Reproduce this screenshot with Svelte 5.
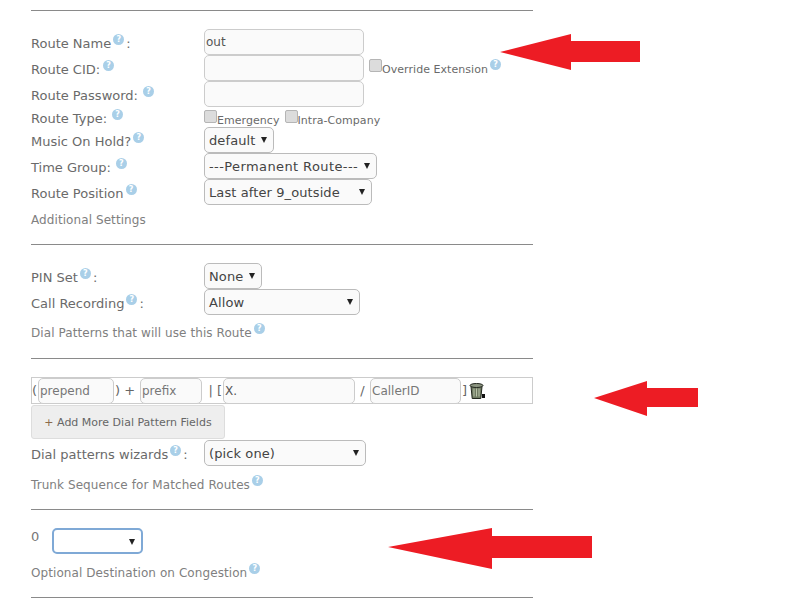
<script>
  const mainRows = [
    { label: 'Route Name', colon: true, value: 'out' },
    { label: 'Route CID:', value: '', override: true, helpCls: 'wide' },
    { label: 'Route Password:', value: '', helpCls: 'wider' }
  ];
  const selectRows = [
    { label: 'Music On Hold?', value: 'default', cls: 'w-moh' },
    { label: 'Time Group:', value: '---Permanent Route---', cls: 'w-time', helpCls: 'wider' },
    { label: 'Route Position', value: 'Last after 9_outside', cls: 'w-pos' }
  ];
</script>

{#snippet help(cls = '')}
  <span class="help {cls}">?</span>
{/snippet}

{#snippet dropdown(value, cls)}
  <div class="sel {cls}"><span>{value}</span><i class="caret"></i></div>
{/snippet}

<div class="page">
  <hr class="first" />

  <section class="rows">
    {#each mainRows as row}
      <div class="row">
        <div class="label">{row.label}{@render help(row.helpCls)}{#if row.colon}<span class="colon">:</span>{/if}</div>
        <div class="field">
          <input class="text w-main" value={row.value} />
          {#if row.override}
            <span class="check over"><i class="box"></i><small>Override Extension</small>{@render help()}</span>
          {/if}
        </div>
      </div>
    {/each}
    <div class="row short">
      <div class="label">Route Type:{@render help('wider')}</div>
      <div class="field checks">
        <span class="check"><i class="box"></i><small>Emergency</small></span>
        <span class="check"><i class="box"></i><small>Intra-Company</small></span>
      </div>
    </div>
    {#each selectRows as row}
      <div class="row">
        <div class="label">{row.label}{@render help(row.helpCls)}</div>
        <div class="field">{@render dropdown(row.value, row.cls)}</div>
      </div>
    {/each}
  </section>

  <h5 class="title t-additional">Additional Settings</h5>
  <hr />

  <section class="rows">
    <div class="row">
      <div class="label">PIN Set{@render help()}<span class="colon">:</span></div>
      <div class="field">{@render dropdown('None', 'w-pin')}</div>
    </div>
    <div class="row">
      <div class="label">Call Recording{@render help()}<span class="colon">:</span></div>
      <div class="field">{@render dropdown('Allow', 'w-rec')}</div>
    </div>
  </section>

  <h5 class="title t-dial">Dial Patterns that will use this Route{@render help()}</h5>
  <hr />

  <div class="pattern">
    <span class="p-open">(</span>
    <input class="text w-prepend" placeholder="prepend" />
    <span class="p-plus">) +</span>
    <input class="text w-prefix" placeholder="prefix" />
    <span class="p-bar">| [</span>
    <input class="text w-x" value="X." />
    <span class="p-slash">/</span>
    <input class="text w-caller" placeholder="CallerID" />
    <span class="p-close">]</span>
    <svg class="trash" width="18" height="18" viewBox="0 0 18 18">
      <path d="M3 4.500h11l-1.200 12H4.200z" fill="#6f7a62" stroke="#23281f" />
      <path d="M6 6.500v8M8.500 6.500v8M11 6.500v8" stroke="#b9c2a9" stroke-width="1" />
      <ellipse cx="8.500" cy="3.500" rx="6.500" ry="2" fill="#8b9480" stroke="#23281f" />
      <path d="M14 12h3v4h-3z" fill="#111" />
    </svg>
  </div>

  <button class="add"><span class="plus">+</span> Add More Dial Pattern Fields</button>

  <div class="row wizard">
    <div class="label">Dial patterns wizards{@render help()}<span class="colon">:</span></div>
    <div class="field">{@render dropdown('(pick one)', 'w-wiz')}</div>
  </div>

  <h5 class="title t-trunk">Trunk Sequence for Matched Routes{@render help()}</h5>
  <hr />

  <div class="seq">
    <span class="num">0</span>
    {@render dropdown('', 'w-seq focus')}
  </div>

  <h5 class="title t-cong">Optional Destination on Congestion{@render help()}</h5>
  <hr />
</div>

<svg class="arrow a1" width="142" height="38" viewBox="0 0 142 38">
  <path d="M1 19 72 1V8H141V29H72V37Z" />
</svg>
<svg class="arrow a2" width="106" height="37" viewBox="0 0 106 37">
  <path d="M1 18 54 1V8H105V27H54V36Z" />
</svg>
<svg class="arrow a3" width="206" height="43" viewBox="0 0 206 43">
  <path d="M1 20 105 1V9H205V31H105V42Z" />
</svg>

<style>
  :global(body) {
    background: #fff;
    font-family: "DejaVu Sans", Verdana, sans-serif;
    font-size: 13px;
    color: #666;
  }
  .page {
    width: 533px;
    height: 599px;
    padding: 10px 0 0 31px;
    box-sizing: border-box;
  }
  hr {
    margin: 0;
    border: 0;
    border-top: 1px solid #8a8a8a;
  }
  hr.first {
    margin-bottom: 18px;
  }
  .rows {
    margin-top: 18px;
  }
  .row {
    display: flex;
    align-items: center;
    height: 26px;
  }
  .row.short {
    height: 20px;
  }
  .label {
    width: 173px;
    flex: none;
    padding-top: 2px;
    white-space: nowrap;
    color: #6a6a6a;
  }
  .colon {
    margin-left: 2px;
  }
  .field {
    display: flex;
    align-items: center;
    flex: 1;
  }
  .help {
    display: inline-block;
    width: 11px;
    height: 11px;
    margin: -8px 0 -8px 2px;
    border-radius: 50%;
    background: #a9cfe8;
    color: #fff;
    font-size: 8px;
    font-weight: bold;
    line-height: 11px;
    text-align: center;
    vertical-align: 6px;
  }
  .help.wide { margin-left: 3px; }
  .help.wider { margin-left: 5px; }
  .text {
    box-sizing: border-box;
    height: 26px;
    margin: 0;
    padding: 0 1px;
    border: 1px solid #ccc;
    border-radius: 5px;
    background: #fafafa;
    font: inherit;
    font-size: 12px;
    color: #555;
  }
  .text::placeholder {
    color: #777;
    opacity: 1;
  }
  .w-main { width: 160px; }
  .check {
    display: inline-flex;
    align-items: flex-start;
    white-space: nowrap;
  }
  .check small {
    margin-top: 4px;
    font-size: 11px;
    letter-spacing: 0.05px;
    color: #6a6a6a;
  }
  .check .help { margin-top: 0; margin-bottom: 0; }
  .box {
    display: block;
    width: 11px;
    height: 11px;
    border: 1px solid #b5b5b5;
    border-radius: 2px;
    background: #dcdcdc;
  }
  .over { margin: -2px 0 0 5px; }
  .checks {
    gap: 5px;
    padding-top: 2px;
  }
  .sel {
    position: relative;
    box-sizing: border-box;
    height: 26px;
    padding-left: 4px;
    border: 1px solid #bbb;
    border-radius: 5px;
    background: #fafafa;
    color: #444;
    letter-spacing: 0.1px;
    line-height: 26px;
    white-space: nowrap;
  }
  .caret {
    position: absolute;
    top: 9px;
    right: 6px;
    border-top: 6px solid #222;
    border-left: 3px solid transparent;
    border-right: 3px solid transparent;
  }
  .sel.focus {
    border: 2px solid #7fa9d6;
    background: #fff;
  }
  .w-moh { width: 70px; }
  .w-time { width: 173px; letter-spacing: 0.4px; }
  .w-pos { width: 168px; }
  .w-pin { width: 58px; }
  .w-rec { width: 156px; }
  .w-wiz { width: 162px; }
  .w-seq { width: 91px; }
  .title {
    margin: 0;
    font-size: 12px;
    font-weight: normal;
    letter-spacing: 0.08px;
    color: #808080;
    line-height: 16px;
  }
  .t-additional { margin: 7px 0 16px; }
  .t-dial { margin: 10px 0 17px; }
  .t-trunk { margin: 11px 0 16px; }
  .t-cong { margin: 11px 0 16px; }
  .pattern {
    box-sizing: border-box;
    display: flex;
    align-items: center;
    width: 502px;
    height: 27px;
    margin-top: 18px;
    border: 1px solid #ccc;
    white-space: nowrap;
  }
  .p-open { width: 6px; }
  .p-plus { width: 26px; padding-left: 1px; box-sizing: border-box; }
  .p-bar { width: 21px; text-align: right; padding-right: 1px; box-sizing: border-box; }
  .p-slash { width: 15px; text-align: center; }
  .p-close { width: 6px; text-align: right; }
  .w-prepend { width: 76px; }
  .w-prefix { width: 62px; }
  .w-x { width: 132px; }
  .w-caller { width: 91px; }
  .trash { margin-left: 1px; }
  .add {
    display: block;
    box-sizing: border-box;
    width: 194px;
    height: 34px;
    margin: 1px 0;
    padding: 0;
    border: 1px solid #ddd;
    border-radius: 3px;
    background: #eee;
    color: #666;
    font: inherit;
    font-size: 11px;
    text-align: center;
  }
  .plus { color: #8a6a4a; }
  .seq {
    display: flex;
    align-items: flex-start;
    height: 26px;
    margin-top: 18px;
  }
  .num {
    width: 21px;
    margin-top: 1px;
    color: #777;
  }
  .arrow {
    position: absolute;
    fill: #ed1c24;
  }
  .a1 { left: 499px; top: 33px; }
  .a2 { left: 593px; top: 380px; }
  .a3 { left: 387px; top: 527px; }
</style>
